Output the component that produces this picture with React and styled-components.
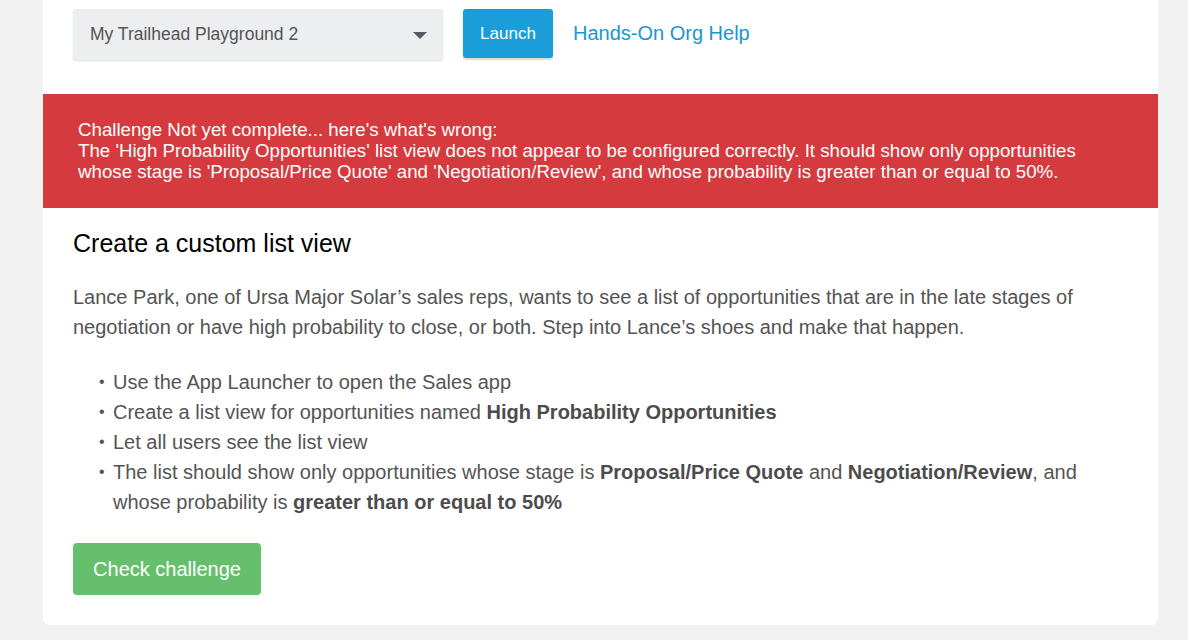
import React from "react";
import styled, { createGlobalStyle } from "styled-components";

const Global = createGlobalStyle`
  html, body { margin: 0; padding: 0; background: #f1f1f1; }
  body { font-family: "Liberation Sans", Arial, sans-serif; }
`;

const Page = styled.div`
  width: 1188px;
  height: 640px;
  box-sizing: border-box;
  padding: 0 30px 15px 43px;
  background: #f1f1f1;
  overflow: hidden;
`;

const Card = styled.div`
  background: #ffffff;
  border-radius: 0 0 7px 7px;
  padding-bottom: 30px;
`;

const Toolbar = styled.div`
  display: flex;
  align-items: flex-start;
  padding: 9px 30px 0;
  height: 94px;
  box-sizing: border-box;
`;

const Select = styled.div`
  width: 370px;
  height: 51px;
  box-sizing: border-box;
  background: #edeef0;
  border-radius: 3px;
  box-shadow: 0 1px 2px rgba(0, 0, 0, 0.12);
  display: flex;
  align-items: center;
  justify-content: space-between;
  padding: 0 16px 0 17px;
  font-size: 17.5px;
  color: #545454;
`;

const Caret = styled.span`
  width: 0;
  height: 0;
  border-left: 7px solid transparent;
  border-right: 7px solid transparent;
  border-top: 7px solid #545a63;
  margin-top: 2px;
`;

const LaunchButton = styled.button`
  margin-left: 20px;
  width: 90px;
  height: 49px;
  border: 0;
  border-radius: 3px;
  background: #1b9dd9;
  color: #ffffff;
  font-family: "Liberation Sans", Arial, sans-serif;
  font-size: 17px;
  box-shadow: 0 2px 2px rgba(0, 0, 0, 0.15);
  padding: 0;
`;

const HelpLink = styled.a`
  margin-left: 20px;
  line-height: 49px;
  font-size: 20px;
  color: #1b96d1;
  text-decoration: none;
`;

const Banner = styled.div`
  background: #d53a3e;
  color: #ffffff;
  font-size: 18.7px;
  line-height: 21px;
  padding: 25px 30px 26px 35px;
`;

const Body = styled.div`
  padding: 20px 30px 0;
`;

const Heading = styled.h2`
  margin: 0;
  font-size: 25px;
  line-height: 30px;
  font-weight: normal;
  color: #000000;
`;

const Paragraph = styled.p`
  margin: 24px 0 0;
  font-size: 20px;
  line-height: 30px;
  color: #545454;
`;

const List = styled.ul`
  margin: 25px 0 0;
  padding: 0 0 0 40px;
  list-style: none;
  font-size: 20px;
  line-height: 30px;
  color: #545454;
`;

const Item = styled.li`
  position: relative;
  &::before {
    content: "•";
    position: absolute;
    left: -14px;
    top: 0;
    font-size: 16px;
  }
  b { font-weight: bold; color: #4c4c4c; }
`;

const CheckButton = styled.button`
  margin-top: 26px;
  width: 188px;
  height: 52px;
  border: 0;
  border-radius: 4px;
  background: #66bf6c;
  color: #ffffff;
  font-family: "Liberation Sans", Arial, sans-serif;
  font-size: 20px;
  padding: 0;
`;

export default function App() {
  return (
    <>
      <Global />
      <Page>
        <Card>
          <Toolbar>
            <Select>
              <span>My Trailhead Playground 2</span>
              <Caret />
            </Select>
            <LaunchButton>Launch</LaunchButton>
            <HelpLink href="#">Hands-On Org Help</HelpLink>
          </Toolbar>
          <Banner>
            Challenge Not yet complete... here's what's wrong:
            <br />
            The 'High Probability Opportunities' list view does not appear to be configured correctly. It should show only opportunities whose stage is 'Proposal/Price Quote' and 'Negotiation/Review', and whose probability is greater than or equal to 50%.
          </Banner>
          <Body>
            <Heading>Create a custom list view</Heading>
            <Paragraph>
              Lance Park, one of Ursa Major Solar’s sales reps, wants to see a list of opportunities that are in the late stages of negotiation or have high probability to close, or both. Step into Lance’s shoes and make that happen.
            </Paragraph>
            <List>
              <Item>Use the App Launcher to open the Sales app</Item>
              <Item>
                Create a list view for opportunities named <b>High Probability Opportunities</b>
              </Item>
              <Item>Let all users see the list view</Item>
              <Item>
                The list should show only opportunities whose stage is <b>Proposal/Price Quote</b> and <b>Negotiation/Review</b>, and whose probability is <b>greater than or equal to 50%</b>
              </Item>
            </List>
            <CheckButton>Check challenge</CheckButton>
          </Body>
        </Card>
      </Page>
    </>
  );
}
